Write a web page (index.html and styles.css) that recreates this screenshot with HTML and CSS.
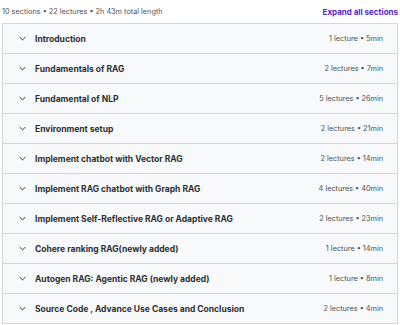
FILE: index.html
```html
<!DOCTYPE html>
<html>
<head>
<meta charset="utf-8">
<link rel="stylesheet" href="styles.css">
</head>
<body>
<div class="curriculum">
  <div class="top">
    <span class="summary">10 sections • 22 lectures • 2h 43m total length</span>
    <span class="expand">Expand all sections</span>
  </div>
  <div class="list">
    <div class="row"><span class="chev"><svg viewBox="0 0 10 6" width="7" height="5"><path d="M1 1l4 4 4-4" fill="none" stroke="#2d2f31" stroke-width="1.4"/></svg></span><span class="title">Introduction</span><span class="meta">1 lecture • 5min</span></div>
    <div class="row"><span class="chev"><svg viewBox="0 0 10 6" width="7" height="5"><path d="M1 1l4 4 4-4" fill="none" stroke="#2d2f31" stroke-width="1.4"/></svg></span><span class="title">Fundamentals of RAG</span><span class="meta">2 lectures • 7min</span></div>
    <div class="row"><span class="chev"><svg viewBox="0 0 10 6" width="7" height="5"><path d="M1 1l4 4 4-4" fill="none" stroke="#2d2f31" stroke-width="1.4"/></svg></span><span class="title">Fundamental of NLP</span><span class="meta">5 lectures • 26min</span></div>
    <div class="row"><span class="chev"><svg viewBox="0 0 10 6" width="7" height="5"><path d="M1 1l4 4 4-4" fill="none" stroke="#2d2f31" stroke-width="1.4"/></svg></span><span class="title">Environment setup</span><span class="meta">2 lectures • 21min</span></div>
    <div class="row"><span class="chev"><svg viewBox="0 0 10 6" width="7" height="5"><path d="M1 1l4 4 4-4" fill="none" stroke="#2d2f31" stroke-width="1.4"/></svg></span><span class="title">Implement chatbot with Vector RAG</span><span class="meta">2 lectures • 14min</span></div>
    <div class="row"><span class="chev"><svg viewBox="0 0 10 6" width="7" height="5"><path d="M1 1l4 4 4-4" fill="none" stroke="#2d2f31" stroke-width="1.4"/></svg></span><span class="title">Implement RAG chatbot with Graph RAG</span><span class="meta">4 lectures • 40min</span></div>
    <div class="row"><span class="chev"><svg viewBox="0 0 10 6" width="7" height="5"><path d="M1 1l4 4 4-4" fill="none" stroke="#2d2f31" stroke-width="1.4"/></svg></span><span class="title">Implement Self-Reflective RAG or Adaptive RAG</span><span class="meta">2 lectures • 23min</span></div>
    <div class="row"><span class="chev"><svg viewBox="0 0 10 6" width="7" height="5"><path d="M1 1l4 4 4-4" fill="none" stroke="#2d2f31" stroke-width="1.4"/></svg></span><span class="title">Cohere ranking RAG(newly added)</span><span class="meta">1 lecture • 14min</span></div>
    <div class="row"><span class="chev"><svg viewBox="0 0 10 6" width="7" height="5"><path d="M1 1l4 4 4-4" fill="none" stroke="#2d2f31" stroke-width="1.4"/></svg></span><span class="title">Autogen RAG: Agentic RAG (newly added)</span><span class="meta">1 lecture • 8min</span></div>
    <div class="row"><span class="chev"><svg viewBox="0 0 10 6" width="7" height="5"><path d="M1 1l4 4 4-4" fill="none" stroke="#2d2f31" stroke-width="1.4"/></svg></span><span class="title">Source Code , Advance Use Cases and Conclusion</span><span class="meta">2 lectures • 4min</span></div>
  </div>
</div>
</body>
</html>
```
FILE: styles.css
```css
html, body {
  margin: 0;
  padding: 0;
  background: #ffffff;
}
body {
  font-family: Inter, "Liberation Sans", sans-serif;
  color: #2d2f31;
}
.curriculum {
  padding: 0 2px 0 2px;
}
.top {
  display: flex;
  justify-content: space-between;
  align-items: center;
  height: 23px;
}
.summary {
  font-size: 7.3px;
  color: #4d5156;
}
.expand {
  font-size: 8px;
  font-weight: 700;
  color: #5624d0;
}
.list {
  border: 1px solid #d1d7dc;
  border-bottom: none;
}
.row {
  display: flex;
  align-items: center;
  height: 29px;
  background: #f7f9fa;
  border-bottom: 1px solid #d1d7dc;
  padding: 0 14px 0 16px;
}
.chev {
  display: flex;
  width: 16px;
}
.title {
  flex: 1;
  font-size: 8.5px;
  font-weight: 700;
  color: #2d2f31;
}
.meta {
  font-size: 7.3px;
  color: #4d5156;
}
```
